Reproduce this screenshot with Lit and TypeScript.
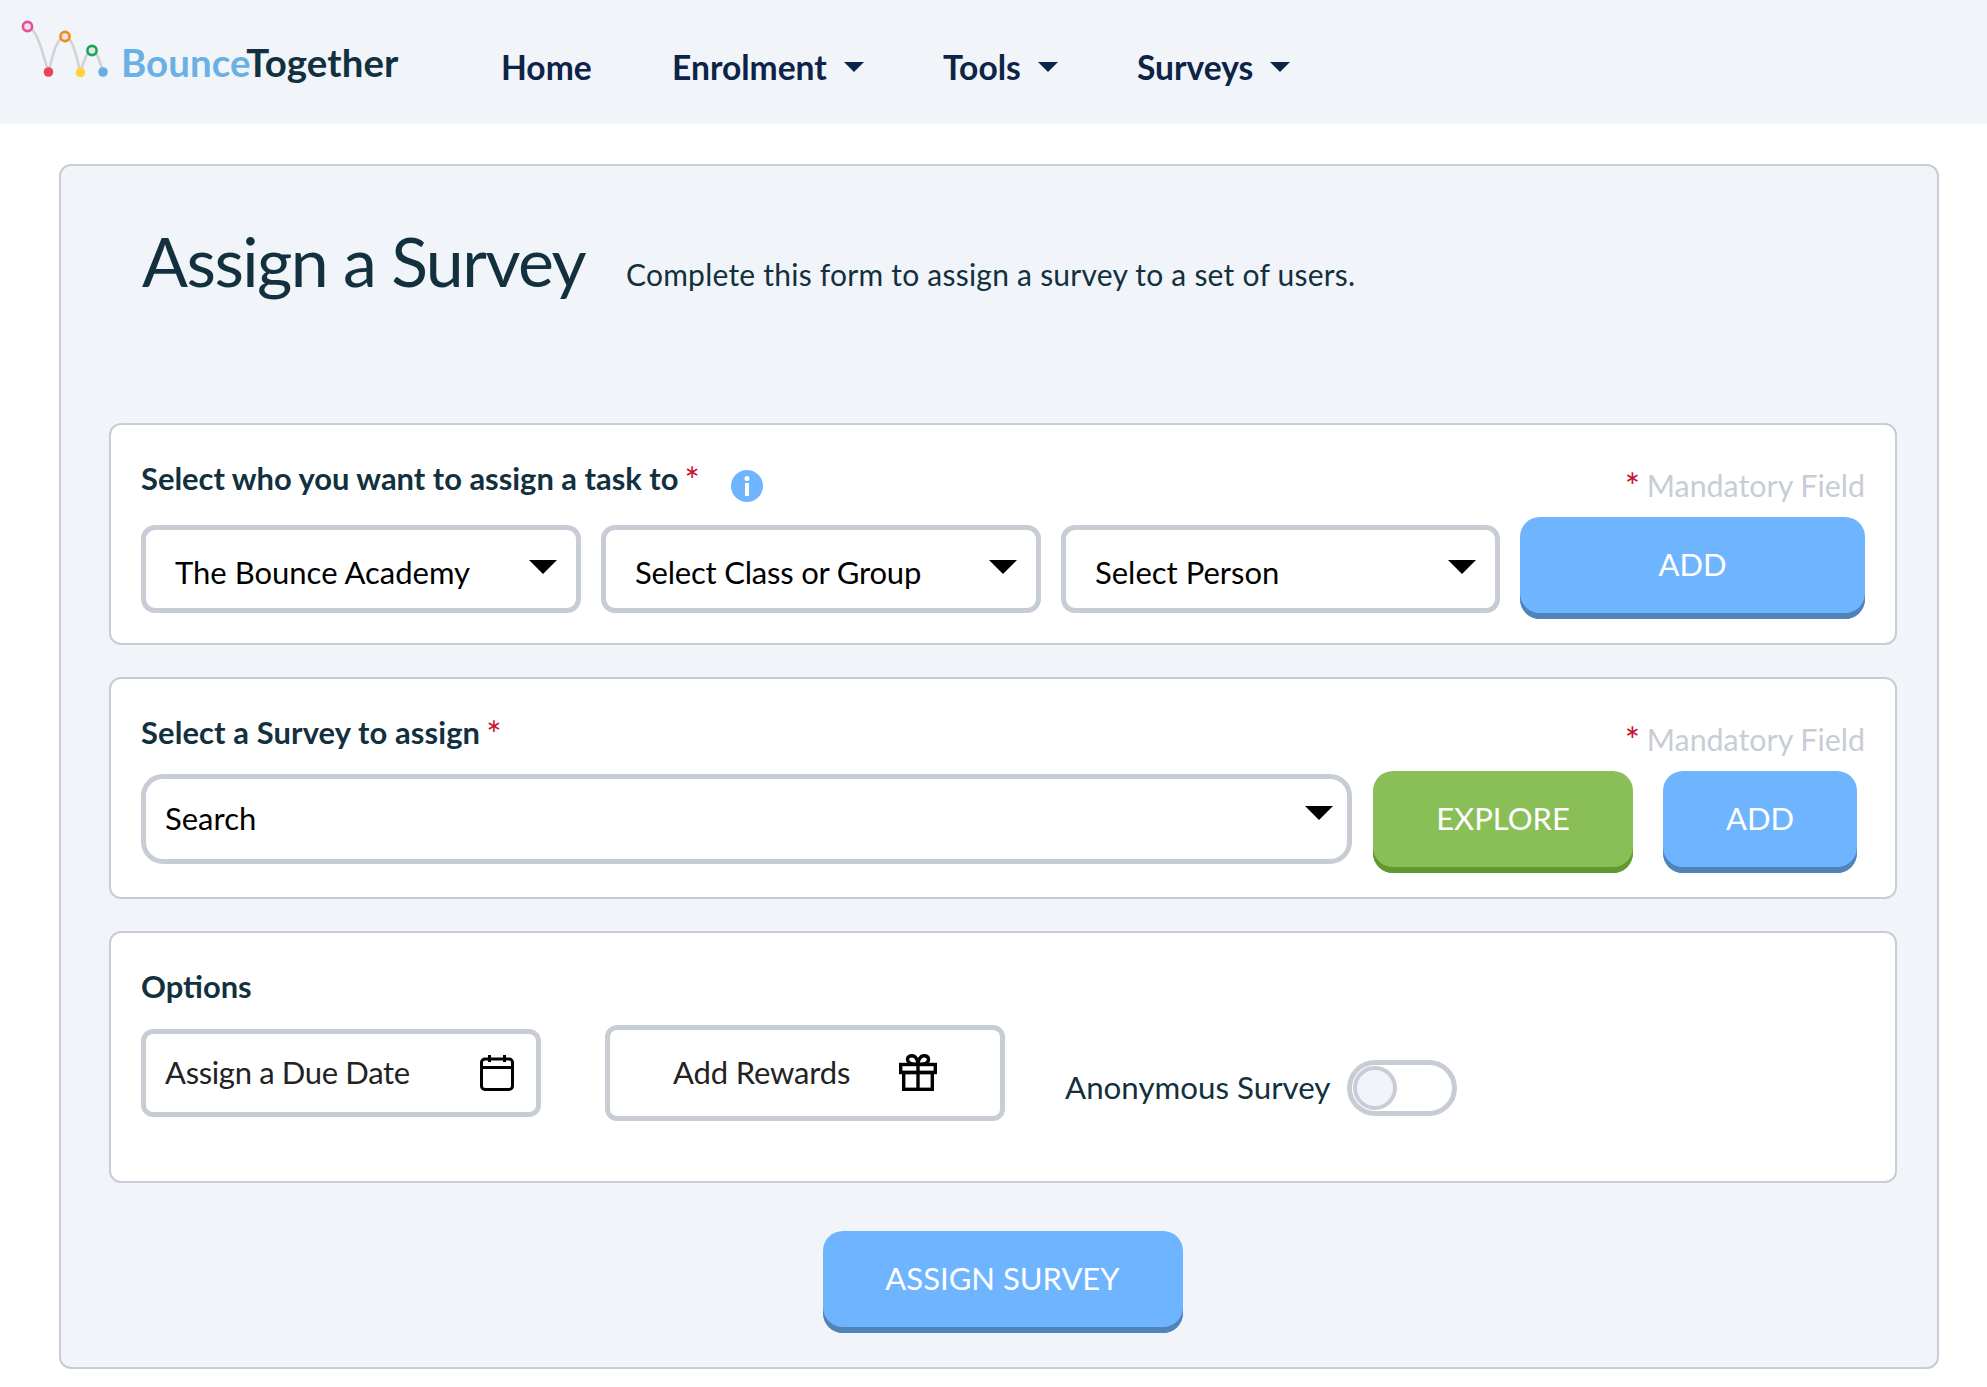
import { LitElement, html, css } from "lit";
import { customElement } from "lit/decorators.js";

const caret = html`<span class="caret"></span>`;

@customElement("app-root")
export class AppRoot extends LitElement {
  static styles = css`
    :host { display: block; width: 1987px; height: 1387px; background: #fff; font-family: "Lato", "Open Sans", sans-serif; color: #12303d; overflow: hidden; }
    * { box-sizing: border-box; }
    nav { height: 124px; background: #f1f4f8; display: flex; align-items: flex-start; padding-left: 20px; }
    .logo { display: flex; align-items: flex-start; width: 481px; flex: none; }
    .logo svg { width: 101px; height: 90px; flex: none; }
    .word { font-size: 38.4px; font-weight: 700; margin-top: 39px; line-height: 46px; letter-spacing: 0.1px; }
    .word b { color: #6ab0e5; font-weight: 700; }
    .word i { color: #12303d; font-style: normal; }
    .nav-item { font-size: 33.6px; font-weight: 700; color: #0d2347; display: flex; align-items: center; margin-top: 46px; line-height: 42px; }
    .nav-item.home { width: 171px; }
    .nav-item.enrol { width: 271px; }
    .nav-item.tools { width: 194px; }
    .nav-caret { width: 0; height: 0; border-left: 10px solid transparent; border-right: 10px solid transparent; border-top: 10px solid #0d2347; margin-left: 17px; }
    .panel { margin: 40px 0 0 59px; width: 1880px; height: 1205px; border: 2px solid #c8cdd5; border-radius: 12px; background: #f1f4f8; padding: 0 41px 0 48px; }
    .head { display: flex; align-items: baseline; height: 257px; padding: 53px 0 0 33px; gap: 40px; }
    h1 { margin: 0; font-size: 68px; font-weight: 400; line-height: 84px; letter-spacing: -1.55px; }
    .sub { font-size: 30px; line-height: 40px; letter-spacing: 0.23px; position: relative; top: -1px; left: 1px; }
    .section { width: 1788px; border: 2px solid #c8cdd5; border-radius: 12px; background: #fff; padding: 0 30px; margin-bottom: 32px; }
    .s1, .s2 { height: 222px; }
    .s3 { height: 252px; }
    .row-top { display: flex; justify-content: space-between; align-items: flex-start; height: 92px; }
    .label { font-size: 30.9px; font-weight: 700; line-height: 40px; padding-top: 34px; display: flex; align-items: flex-start; color: #12303d; }
    .s2 .label { letter-spacing: 0.12px; }
    .star { color: #c8102e; font-weight: 400; font-size: 36px; line-height: 42px; margin-left: 6px; width: 13px; }
    .info { width: 32px; height: 32px; margin: 11px 0 0 34px; }
    .mand { font-size: 30.4px; line-height: 40px; color: #c8cdd5; padding-top: 40px; display: flex; align-items: flex-start; }
    .mand .star { margin: 0 8px 0 0; width: 14px; }
    .controls { display: flex; align-items: flex-start; }
    .select { border: 5px solid #c8cdd5; border-radius: 14px; background: #fff; height: 88px; margin-top: 8px; display: flex; align-items: center; justify-content: space-between; font-size: 31px; color: #000; flex: none; }
    .select.small { width: 440px; padding: 6px 19px 0 29px; margin-right: 20px; }
    .select.small.last { width: 439px; }
    .select.search { width: 1211px; height: 90px; margin-top: 3px; margin-right: 21px; padding: 0 14px 2px 19px; border-radius: 22px; }
    .label-t { letter-spacing: -0.2px; }
    .caret { width: 0; height: 0; border-left: 14px solid transparent; border-right: 14px solid transparent; border-top: 14px solid #000; margin-top: -10px; }
    .search .caret { margin-top: -11px; }
    .btn { border: none; height: 102px; padding: 0 0 8px; border-radius: 20px; background: #6eb4ff; box-shadow: inset 0 -6px 0 #5083b8; color: #fff; font: 400 31px "Lato", sans-serif; display: flex; align-items: center; justify-content: center; flex: none; }
    .btn.green { background: #8abf58; box-shadow: inset 0 -6px 0 #629830; width: 260px; margin-right: 30px; }
    .btn.add1 { width: 345px; }
    .btn.add2 { width: 194px; }
    .btn.assign { width: 360px; margin: 0 auto; }
    .s2 .row-top { height: 91px; }
    .s2 .controls { margin-top: 1px; }
    .opts { display: flex; align-items: flex-start; }
    .s3 .label { padding-top: 34px; height: 96px; }
    .box { border: 5px solid #c8cdd5; border-radius: 12px; background: #fff; display: flex; align-items: center; font-size: 31px; color: #222; }
    .due { width: 400px; height: 88px; padding: 0 22px 2px 19px; justify-content: space-between; letter-spacing: -0.35px; }
    .due svg, .rew svg { flex: none; }
    .rew { width: 400px; height: 96px; margin: -4px 0 0 64px; padding: 0 0 2px 63px; gap: 49px; letter-spacing: -0.15px; }
    .anon { font-size: 31.3px; color: #12303d; margin: 38px 0 0 60px; line-height: 40px; }
    .toggle { width: 110px; height: 56px; border: 5px solid #c8cdd5; border-radius: 28px; margin: 31px 0 0 16px; background: #fff; padding: 1px; flex: none; }
    .toggle span { display: block; width: 44px; height: 44px; border-radius: 50%; background: #f1f4f8; border: 4px solid #c8cdd5; }
    .foot { padding-top: 16px; display: flex; }
  `;

  render() {
    return html`
      <nav>
        <div class="logo">
          <svg viewBox="20 0 101 90" aria-hidden="true">
            <path d="M27.5 26.5 C38 30 42 52 48.5 72 C53 54 57 37 65 36.5 C73 37 76 56 80.5 72.5 C84 60 87 50.5 92 50.5 C97 50.5 100 62 103 72" fill="none" stroke="#d2d3d7" stroke-width="2.6"/>
            <circle cx="27.5" cy="26.5" r="4.6" fill="#e6e6ea" stroke="#ea4c98" stroke-width="2.6"/>
            <circle cx="65" cy="36.5" r="4.6" fill="#e6e6ea" stroke="#f58a16" stroke-width="2.6"/>
            <circle cx="92" cy="50.5" r="4.6" fill="#e6e6ea" stroke="#13a84f" stroke-width="2.6"/>
            <circle cx="48.5" cy="72" r="4.8" fill="#ed4358"/>
            <circle cx="80.5" cy="72.5" r="4.8" fill="#ffd23c"/>
            <circle cx="103" cy="72" r="4.8" fill="#69afe5"/>
          </svg>
          <div class="word"><b>Bounce</b><i>Together</i></div>
        </div>
        <div class="nav-item home">Home</div>
        <div class="nav-item enrol">Enrolment<span class="nav-caret"></span></div>
        <div class="nav-item tools">Tools<span class="nav-caret"></span></div>
        <div class="nav-item">Surveys<span class="nav-caret"></span></div>
      </nav>
      <div class="panel">
        <div class="head">
          <h1>Assign a Survey</h1>
          <div class="sub">Complete this form to assign a survey to a set of users.</div>
        </div>
        <div class="section s1">
          <div class="row-top">
            <div class="label">Select who you want to assign a task to<span class="star">*</span>
              <svg class="info" viewBox="0 0 32 32"><circle cx="16" cy="16" r="16" fill="#6eb4ff"/><circle cx="16" cy="8.5" r="2.5" fill="#fff"/><rect x="14" y="13" width="4" height="13" fill="#fff"/></svg>
            </div>
            <div class="mand"><span class="star">*</span>Mandatory Field</div>
          </div>
          <div class="controls">
            <div class="select small">The Bounce Academy${caret}</div>
            <div class="select small"><span class="label-t">Select Class or Group</span>${caret}</div>
            <div class="select small last">Select Person${caret}</div>
            <button class="btn add1">ADD</button>
          </div>
        </div>
        <div class="section s2">
          <div class="row-top">
            <div class="label">Select a Survey to assign<span class="star">*</span></div>
            <div class="mand"><span class="star">*</span>Mandatory Field</div>
          </div>
          <div class="controls">
            <div class="select search">Search${caret}</div>
            <button class="btn green">EXPLORE</button>
            <button class="btn add2">ADD</button>
          </div>
        </div>
        <div class="section s3">
          <div class="label">Options</div>
          <div class="opts">
            <div class="box due">Assign a Due Date
              <svg width="34" height="37" viewBox="0 0 34 37" fill="none" stroke="#000" stroke-width="3"><rect x="1.5" y="5" width="31" height="30.5" rx="3.5"/><path d="M1.5 13.5H32.5M9.5 1V8M24.5 1V8"/></svg>
            </div>
            <div class="box rew">Add Rewards
              <svg width="38" height="37" viewBox="0 0 38 37" fill="none" stroke="#000" stroke-width="3.4"><rect x="1.7" y="10.5" width="34.6" height="8"/><rect x="4.7" y="18.5" width="28.6" height="16.8"/><path d="M19 10.5V35.3M19 10.5C15 10.5 8.5 10 8.5 5.5C8.5 2.5 11 1.7 13 1.7C16.5 1.7 19 6 19 10.5C19 6 21.5 1.7 25 1.7C27 1.7 29.5 2.5 29.5 5.5C29.5 10 23 10.5 19 10.5Z"/></svg>
            </div>
            <div class="anon">Anonymous Survey</div>
            <div class="toggle"><span></span></div>
          </div>
        </div>
        <div class="foot"><button class="btn assign">ASSIGN SURVEY</button></div>
      </div>
    `;
  }
}
